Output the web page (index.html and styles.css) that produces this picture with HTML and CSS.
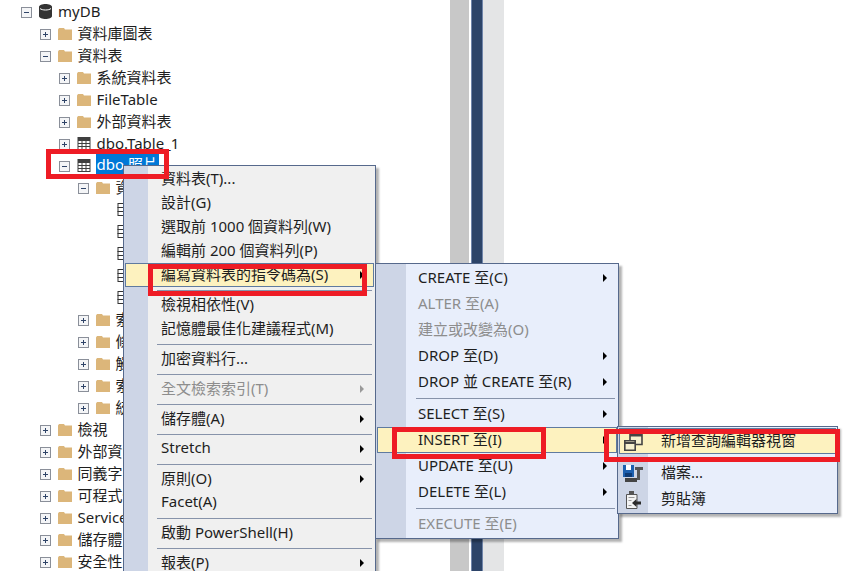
FILE: index.html
```html
<!DOCTYPE html>
<html>
<head>
    <title>myDB</title>
    <meta charset="utf-8">
    <link rel="stylesheet" href="styles.css">
</head>
<body>
    <svg class="defs" width="0" height="0">
        <symbol id="plus" viewBox="0 0 11 11">
            <rect x="0.5" y="0.5" width="10" height="10" fill="#f4f5f7" stroke="#8a8f99"/>
            <path d="M3 5.5h5M5.5 3v5" stroke="#2f4468"/>
        </symbol>
        <symbol id="minus" viewBox="0 0 11 11">
            <rect x="0.5" y="0.5" width="10" height="10" fill="#f4f5f7" stroke="#8a8f99"/>
            <path d="M3 5.5h5" stroke="#2f4468"/>
        </symbol>
        <symbol id="folder" viewBox="0 0 14 13">
            <path d="M0 2.5 1 1h5l1 1.5h7V13H0z" fill="#dcb67a"/>
        </symbol>
        <symbol id="table" viewBox="0 0 13 13">
            <rect x="0" y="0" width="13" height="13" fill="#3f3f3f"/>
            <path d="M1 4h3v2H1zM5 4h3v2H5zM9 4h3v2H9zM1 7h3v2H1zM5 7h3v2H5zM9 7h3v2H9zM1 10h3v2H1zM5 10h3v2H5zM9 10h3v2H9z" fill="#fff"/>
        </symbol>
        <symbol id="column" viewBox="0 0 13 13">
            <rect x="0.5" y="0.5" width="12" height="12" fill="#fff" stroke="#333"/>
            <path d="M0 4.5h13M0 8.5h13" stroke="#333"/>
        </symbol>
    </svg>

    <div class="backdrop">
        <div class="split-left"></div>
        <div class="split-bar"></div>
        <div class="split-right"></div>
    </div>

    <ul class="tree">
        <li class="row"><svg class="exp"><use href="#minus"/></svg><svg class="db" viewBox="0 0 13 15"><path d="M0 3c0-4 13-4 13 0v9c0 4-13 4-13 0z" fill="#333"/><path d="M1 4.5c2 2 9 2 11 0" stroke="#fff" fill="none"/></svg><span>myDB</span></li>
        <li class="row lv2"><svg class="exp"><use href="#plus"/></svg><svg class="ico"><use href="#folder"/></svg><span>資料庫圖表</span></li>
        <li class="row lv2"><svg class="exp"><use href="#minus"/></svg><svg class="ico"><use href="#folder"/></svg><span>資料表</span></li>
        <li class="row lv3"><svg class="exp"><use href="#plus"/></svg><svg class="ico"><use href="#folder"/></svg><span>系統資料表</span></li>
        <li class="row lv3"><svg class="exp"><use href="#plus"/></svg><svg class="ico"><use href="#folder"/></svg><span>FileTable</span></li>
        <li class="row lv3"><svg class="exp"><use href="#plus"/></svg><svg class="ico"><use href="#folder"/></svg><span>外部資料表</span></li>
        <li class="row lv3"><svg class="exp"><use href="#plus"/></svg><svg class="ico"><use href="#table"/></svg><span>dbo.Table_1</span></li>
        <li class="row lv3"><svg class="exp"><use href="#minus"/></svg><svg class="ico"><use href="#table"/></svg><span class="selected">dbo.照片</span></li>
        <li class="row lv4"><svg class="exp"><use href="#minus"/></svg><svg class="ico"><use href="#folder"/></svg><span>資料行</span></li>
        <li class="row lv5"><svg class="ico"><use href="#column"/></svg></li>
        <li class="row lv5"><svg class="ico"><use href="#column"/></svg></li>
        <li class="row lv5"><svg class="ico"><use href="#column"/></svg></li>
        <li class="row lv5"><svg class="ico"><use href="#column"/></svg></li>
        <li class="row lv5"><svg class="ico"><use href="#column"/></svg></li>
        <li class="row lv4"><svg class="exp"><use href="#plus"/></svg><svg class="ico"><use href="#folder"/></svg><span>索引鍵</span></li>
        <li class="row lv4"><svg class="exp"><use href="#plus"/></svg><svg class="ico"><use href="#folder"/></svg><span>條件約束</span></li>
        <li class="row lv4"><svg class="exp"><use href="#plus"/></svg><svg class="ico"><use href="#folder"/></svg><span>觸發程序</span></li>
        <li class="row lv4"><svg class="exp"><use href="#plus"/></svg><svg class="ico"><use href="#folder"/></svg><span>索引</span></li>
        <li class="row lv4"><svg class="exp"><use href="#plus"/></svg><svg class="ico"><use href="#folder"/></svg><span>統計資料</span></li>
        <li class="row lv2"><svg class="exp"><use href="#plus"/></svg><svg class="ico"><use href="#folder"/></svg><span>檢視</span></li>
        <li class="row lv2"><svg class="exp"><use href="#plus"/></svg><svg class="ico"><use href="#folder"/></svg><span>外部資源</span></li>
        <li class="row lv2"><svg class="exp"><use href="#plus"/></svg><svg class="ico"><use href="#folder"/></svg><span>同義字</span></li>
        <li class="row lv2"><svg class="exp"><use href="#plus"/></svg><svg class="ico"><use href="#folder"/></svg><span>可程式性</span></li>
        <li class="row lv2"><svg class="exp"><use href="#plus"/></svg><svg class="ico"><use href="#folder"/></svg><span>Service Broker</span></li>
        <li class="row lv2"><svg class="exp"><use href="#plus"/></svg><svg class="ico"><use href="#folder"/></svg><span>儲存體</span></li>
        <li class="row lv2"><svg class="exp"><use href="#plus"/></svg><svg class="ico"><use href="#folder"/></svg><span>安全性</span></li>
    </ul>

    <div class="menu menu-table">
        <div class="item">資料表(T)...</div>
        <div class="item">設計(G)</div>
        <div class="item">選取前 1000 個資料列(W)</div>
        <div class="item">編輯前 200 個資料列(P)</div>
        <div class="item hover sub">編寫資料表的指令碼為(S)</div>
        <div class="sep"></div>
        <div class="item">檢視相依性(V)</div>
        <div class="item">記憶體最佳化建議程式(M)</div>
        <div class="sep"></div>
        <div class="item">加密資料行...</div>
        <div class="sep"></div>
        <div class="item off sub">全文檢索索引(T)</div>
        <div class="sep"></div>
        <div class="item sub">儲存體(A)</div>
        <div class="sep"></div>
        <div class="item sub">Stretch</div>
        <div class="sep"></div>
        <div class="item sub">原則(O)</div>
        <div class="item">Facet(A)</div>
        <div class="sep"></div>
        <div class="item">啟動 PowerShell(H)</div>
        <div class="sep"></div>
        <div class="item sub">報表(P)</div>
    </div>

    <div class="menu menu-script">
        <div class="item sub">CREATE 至(C)</div>
        <div class="item off">ALTER 至(A)</div>
        <div class="item off">建立或改變為(O)</div>
        <div class="item sub">DROP 至(D)</div>
        <div class="item sub">DROP 並 CREATE 至(R)</div>
        <div class="sep"></div>
        <div class="item sub">SELECT 至(S)</div>
        <div class="item hover sub">INSERT 至(I)</div>
        <div class="item sub">UPDATE 至(U)</div>
        <div class="item sub">DELETE 至(L)</div>
        <div class="sep"></div>
        <div class="item off">EXECUTE 至(E)</div>
    </div>

    <div class="menu menu-target">
        <div class="item hover">
            <svg class="menu-ico" viewBox="0 0 22 22"><path d="M7 2.5h12v12H7z" fill="#f6f0d0" stroke="#444" stroke-width="1.6"/><path d="M7 5h12" stroke="#444" stroke-width="3"/><path d="M1.8 10.8h10.4v9.4H1.8z" fill="#f6f0d0" stroke="#444" stroke-width="1.6"/><path d="M1.8 13h10.4" stroke="#444" stroke-width="2"/></svg>
            新增查詢編輯器視窗
        </div>
        <div class="sep"></div>
        <div class="item">
            <svg class="menu-ico" viewBox="0 0 22 22"><path d="M0 3h11v12H0z" fill="#1c5fae"/><path d="M3 3h5v5H3z" fill="#fff"/><path d="M2 11h7v4H2z" fill="#0d3a75"/><path d="M12 5h8v3h-3v10h-3V8h-2z" fill="#555"/><path d="M2 16h12v4H2z" fill="#444"/></svg>
            檔案...
        </div>
        <div class="item">
            <svg class="menu-ico" viewBox="0 0 22 22"><path d="M3.5 6.5h10.5v14H3.5z" fill="#f3f3f3" stroke="#555"/><path d="M6 3h5v4H6z" fill="#555"/><path d="M5.5 9.5h6M5.5 12.5h3M5.5 17.5h3" stroke="#999"/><path d="M18 13.5h-4.5V11l-4.500 4 4.500 4v-2.500H18z" fill="#2b2b2b"/></svg>
            剪貼簿
        </div>
    </div>

    <div class="mark mark-node"></div>
    <div class="mark mark-script"></div>
    <div class="mark mark-insert"></div>
    <div class="mark mark-window"></div>
</body>
</html>
```

FILE: styles.css
```css
body {
    margin: 0;
    width: 865px;
    height: 571px;
    overflow: hidden;
    background: #fff;
    font-family: "Noto Sans", "Noto Sans CJK TC", sans-serif;
    font-size: 15px;
    color: #1e1e1e;
    position: relative;
}
.defs {
    position: absolute;
}
.backdrop {
    position: absolute;
    left: 450px;
    top: 0;
    bottom: 0;
    display: flex;
}
.split-left {
    width: 19px;
    background: #c8c8c8;
}
.split-bar {
    width: 12px;
    margin-left: 2px;
    background: #2d4468;
    border-left: 1px solid #7085aa;
    border-right: 1px solid #7085aa;
    box-sizing: border-box;
}
.split-right {
    width: 21px;
    background: #e4e5e6;
}
.tree {
    list-style: none;
    margin: 0;
    padding: 0 0 0 21px;
}
.row {
    height: 22px;
    display: flex;
    align-items: center;
    white-space: nowrap;
}
.row span {
    margin-bottom: 1px;
}
.lv2 { padding-left: 19px; }
.lv3 { padding-left: 38px; }
.lv4 { padding-left: 57px; }
.lv5 { padding-left: 96px; }
.exp {
    width: 11px;
    height: 11px;
    margin: 3px 7px 0 0;
    flex: none;
}
.ico {
    width: 14px;
    height: 13px;
    margin-right: 5.500px;
    flex: none;
}
.db {
    width: 13px;
    height: 15px;
    margin-right: 6px;
    flex: none;
}
.selected {
    background: #0078d7;
    color: #fff;
    padding: 0 1px;
    line-height: 21px;
    margin-left: -1px;
}
.menu {
    position: absolute;
    box-sizing: border-box;
    border: 1px solid #56698c;
    box-shadow: 3px 3px 2px rgba(0,0,0,0.3);
    padding: 1px;
}
.item {
    display: flex;
    align-items: center;
    box-sizing: border-box;
    white-space: nowrap;
    position: relative;
    padding-bottom: 4px;
}
.sep {
    height: 6px;
    display: flex;
    align-items: center;
}
.sep::after {
    content: "";
    display: block;
    width: 100%;
    height: 1px;
    background: #8793aa;
}
.off {
    color: #8d8d8d;
}
.hover {
    background: #fdf2bf;
    outline: 1px solid #5f7a9f;
    outline-offset: -1px;
}
.sub::after {
    content: "";
    position: absolute;
    top: 50%;
    margin-top: -4px;
    border-left: 4px solid #000;
    border-top: 4px solid transparent;
    border-bottom: 4px solid transparent;
}
.sub.off::after {
    border-left-color: #999;
}
.menu-table {
    left: 123px;
    top: 165px;
    width: 253px;
    background: linear-gradient(to right, #cdd5e6 24px, #f0f0f0 24px);
}
.menu-table .item {
    height: 24px;
    padding-left: 36px;
}
.menu-table .sep {
    margin-left: 32px;
    margin-right: 2px;
}
.menu-table .sub::after {
    left: 235px;
}
.menu-script {
    left: 375px;
    top: 263px;
    width: 244px;
    background: linear-gradient(to right, #cdd5e6 30px, #e8eefb 30px);
}
.menu-script .item {
    height: 26px;
    padding-left: 41px;
}
.menu-script .sep {
    margin-left: 39px;
    margin-right: 2px;
}
.menu-script .sub::after {
    left: 226px;
}
.menu-target {
    left: 617px;
    top: 426px;
    width: 221px;
    background: linear-gradient(to right, #cdd5e6 30px, #e8eefb 30px);
}
.menu-target .item {
    height: 26px;
    padding-left: 42px;
}
.menu-target .sep {
    margin-left: 32px;
}
.menu-ico {
    position: absolute;
    left: 4px;
    top: 2px;
    width: 22px;
    height: 22px;
}
.mark {
    position: absolute;
    box-sizing: border-box;
    border: 5px solid #ee1c25;
}
.mark-node {
    left: 46px;
    top: 149px;
    width: 123px;
    height: 30px;
}
.mark-script {
    left: 148px;
    top: 264px;
    width: 219px;
    height: 32px;
}
.mark-insert {
    left: 392px;
    top: 427px;
    width: 154px;
    height: 32px;
}
.mark-window {
    left: 604px;
    top: 429px;
    width: 236px;
    height: 33px;
}
```
